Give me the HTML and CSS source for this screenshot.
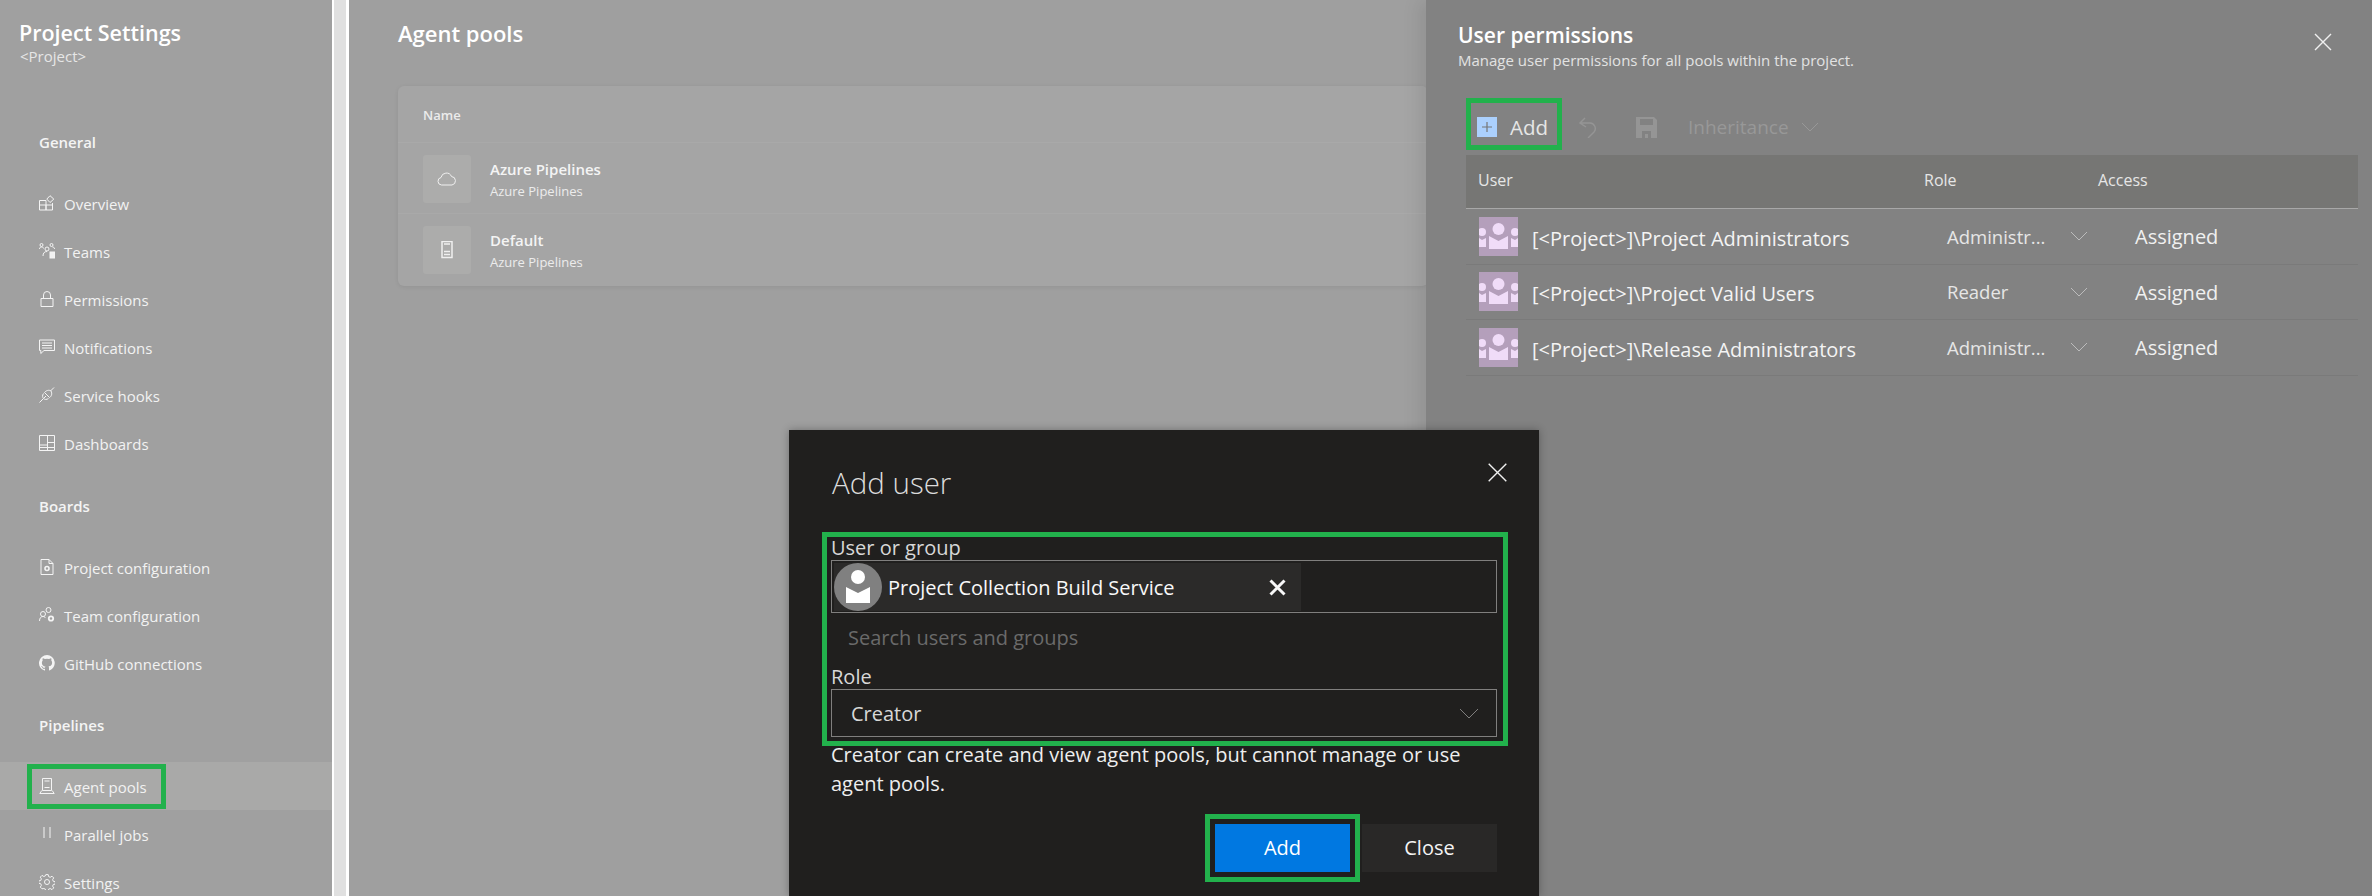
FILE: index.html
```html
<!DOCTYPE html>
<html lang="en">
<head>
    <meta charset="UTF-8">
    <title>Agent pools - Project Settings</title>
    <link rel="stylesheet" href="styles.css">
</head>
<body>
    <div id="page">
        <div id="sidebar">
            <div class="side-title">Project Settings</div>
            <div class="side-sub">&lt;Project&gt;</div>

            <div class="side-head first">General</div>
            <ul class="side-list">
                <li>
                    <svg class="ico" viewBox="0 0 16 16"><path d="M.5 5.500h6.500v9.500H.5zM.5 10h13M7 10v5M7 15h6.500V8M11 .7l3.800 3.400L11 7.500 7.800 4.100z"/></svg>
                    <span>Overview</span>
                </li>
                <li>
                    <svg class="ico" viewBox="0 0 16 16"><circle cx="2.500" cy="2" r="1.500"/><circle cx="12.500" cy="2" r="1.500"/><circle cx="8" cy="6" r="2"/><path d="M.5 6c0-1.500 1-2 2-2s1.500.5 2.500 1.500M15.500 6c0-1.500-1-2-2-2M4 13c0-3 1.500-4.500 4-4.500"/><rect x="11" y="9" width="4.500" height="6" fill="currentColor"/></svg>
                    <span>Teams</span>
                </li>
                <li>
                    <svg class="ico" viewBox="0 0 16 16"><path d="M2 7.500h12v8H2zM4.500 7.500V4a3.500 3.500 0 0 1 7 0v3.500"/></svg>
                    <span>Permissions</span>
                </li>
                <li>
                    <svg class="ico" viewBox="0 0 16 16"><path d="M.5 1h15v10.500H5L1.800 14.500v-3H.5zM3 4h10M3 6.500h10M3 9h10"/></svg>
                    <span>Notifications</span>
                </li>
                <li>
                    <svg class="ico" viewBox="0 0 16 16"><path d="M.5 15.500l4-4M15 .5l-3.500 3.500M5.500 5.500l5 5c2-1 3-4 1.500-6.500-2-1.500-5-.5-6.500 1.500zM4.500 6.500c-1.500 2-1 4 0 5s3 1.500 5 0M7 9l-2 2"/></svg>
                    <span>Service hooks</span>
                </li>
                <li>
                    <svg class="ico" viewBox="0 0 16 16"><path d="M.5.5h15v15H.5zM8.500.5v15M.5 10h8M8.500 7.500h7M.5 12.500h15"/></svg>
                    <span>Dashboards</span>
                </li>
            </ul>

            <div class="side-head">Boards</div>
            <ul class="side-list">
                <li>
                    <svg class="ico" viewBox="0 0 16 16"><path d="M2 .5h8l4 4v11H2zM10 .5v4h4"/><circle cx="8" cy="9.500" r="2" stroke-width="1.600"/></svg>
                    <span>Project configuration</span>
                </li>
                <li>
                    <svg class="ico" viewBox="0 0 16 16"><circle cx="9.500" cy="3" r="2.500"/><circle cx="4" cy="7" r="2.500"/><path d="M.5 14c0-3 1.500-4.500 3.500-4.500 1 0 2 .5 2.500 1.500"/><circle cx="12" cy="11.500" r="2.200" stroke-width="1.800"/></svg>
                    <span>Team configuration</span>
                </li>
                <li>
                    <svg class="ico" viewBox="0 0 16 16"><path class="solid" d="M8 0a8 8 0 0 0-2.500 15.600c.4.100.5-.2.500-.4v-1.400c-2.200.5-2.700-1-2.700-1-.4-.9-.9-1.200-.9-1.200-.7-.5.100-.5.100-.5.800.1 1.200.8 1.200.8.700 1.200 1.900.9 2.300.7.100-.5.300-.9.500-1.100-1.800-.2-3.600-.9-3.600-4 0-.9.300-1.600.8-2.100-.1-.2-.4-1 .1-2.100 0 0 .7-.2 2.200.8a7.600 7.600 0 0 1 4 0c1.500-1 2.200-.8 2.200-.8.400 1.100.2 1.900.1 2.100.5.600.8 1.300.8 2.100 0 3.100-1.900 3.700-3.600 3.900.3.200.5.700.5 1.500v2.200c0 .2.100.5.500.4A8 8 0 0 0 8 0z"/></svg>
                    <span>GitHub connections</span>
                </li>
            </ul>

            <div class="side-head">Pipelines</div>
            <ul class="side-list">
                <li class="active">
                    <div class="mark-nav">
                        <svg class="ico" viewBox="0 0 16 16"><path d="M3.500.5h9v12h-9zM5.500 3h5M5.500 9.500h5M.8 15.500l2-3M15.200 15.500l-2-3M.8 15.500h14.400"/></svg>
                        <span>Agent pools</span>
                    </div>
                </li>
                <li>
                    <svg class="ico" viewBox="0 0 16 16"><path d="M5 1v11M11 1v11"/></svg>
                    <span>Parallel jobs</span>
                </li>
                <li>
                    <svg class="ico" viewBox="0 0 16 16"><circle cx="8" cy="8" r="2.500"/><path d="M6.800.6h2.400l.4 2 1.600.7 1.800-1.100 1.700 1.700-1.100 1.800.7 1.600 2 .4v2.400l-2 .4-.7 1.600 1.100 1.800-1.700 1.700-1.800-1.100-1.600.7-.4 2H6.800l-.4-2-1.600-.7L3 14.800l-1.700-1.700 1.100-1.800-.7-1.600-2-.4V6.900l2-.4.700-1.600L1.300 3.100 3 1.400l1.800 1.100 1.600-.7z"/></svg>
                    <span>Settings</span>
                </li>
            </ul>
        </div>

        <div id="divider"></div>

        <div id="main">
            <h1 class="main-title">Agent pools</h1>
            <div class="card">
                <div class="card-head">Name</div>
                <div class="pool">
                    <div class="pool-icon">
                        <svg width="20" height="14" viewBox="0 0 20 14"><path d="M5 13H4.500a3.800 3.800 0 0 1-.5-7.500A5.500 5.500 0 0 1 14.500 4.500 4.300 4.300 0 0 1 15 13z"/></svg>
                    </div>
                    <div class="pool-text">
                        <div class="pool-name">Azure Pipelines</div>
                        <div class="pool-sub">Azure Pipelines</div>
                    </div>
                </div>
                <div class="pool">
                    <div class="pool-icon">
                        <svg width="12" height="18" viewBox="0 0 12 18"><path d="M1 .5h10v16H1zM3 3h6M3 10.500h6M3 13.500h6" stroke-width="1.500"/></svg>
                    </div>
                    <div class="pool-text">
                        <div class="pool-name">Default</div>
                        <div class="pool-sub">Azure Pipelines</div>
                    </div>
                </div>
            </div>
        </div>

        <div id="panel">
            <div class="panel-title">User permissions</div>
            <div class="panel-sub">Manage user permissions for all pools within the project.</div>
            <svg class="panel-close" width="18" height="18" viewBox="0 0 18 18"><path d="M1 1l16 16M17 1L1 17"/></svg>

            <div class="toolbar">
                <div class="mark-add">
                    <svg class="plus" width="20" height="20" viewBox="0 0 20 20"><path fill="#abd0fd" d="M0 0h20v20H0z"/><path fill="none" stroke="#767676" stroke-width="1.200" d="M10 5v10M5 10h10"/></svg>
                    <span>Add</span>
                </div>
                <svg class="undo" width="18" height="21" viewBox="0 0 18 21"><path d="M6 1L1 6l6 4M1.500 6H11a5.500 5.500 0 0 1 4 9l-6 6"/></svg>
                <svg class="save" width="21" height="21" viewBox="0 0 21 21"><path d="M0 0h18l3 3v18H0zM4 2v6h13V2zM6 14v7h3v-4h3v4h3v-7z" fill-rule="evenodd"/></svg>
                <span class="inherit">Inheritance</span>
                <svg class="chev dim" width="18" height="10" viewBox="0 0 18 10"><path d="M1 1l8 8 8-8"/></svg>
            </div>

            <div class="perm-head">
                <div class="col-user">User</div>
                <div class="col-role">Role</div>
                <div>Access</div>
            </div>

            <div class="perm-row">
                <svg class="group" viewBox="0 0 39 39"><use href="#group-figs"/></svg>
                <div class="perm-name">[&lt;Project&gt;]\Project Administrators</div>
                <div class="perm-role">Administr...</div>
                <svg class="chev" width="18" height="10" viewBox="0 0 18 10"><path d="M1 1l8 8 8-8"/></svg>
                <div class="perm-access">Assigned</div>
            </div>
            <div class="perm-row">
                <svg class="group" viewBox="0 0 39 39"><use href="#group-figs"/></svg>
                <div class="perm-name">[&lt;Project&gt;]\Project Valid Users</div>
                <div class="perm-role">Reader</div>
                <svg class="chev" width="18" height="10" viewBox="0 0 18 10"><path d="M1 1l8 8 8-8"/></svg>
                <div class="perm-access">Assigned</div>
            </div>
            <div class="perm-row">
                <svg class="group" viewBox="0 0 39 39"><use href="#group-figs"/></svg>
                <div class="perm-name">[&lt;Project&gt;]\Release Administrators</div>
                <div class="perm-role">Administr...</div>
                <svg class="chev" width="18" height="10" viewBox="0 0 18 10"><path d="M1 1l8 8 8-8"/></svg>
                <div class="perm-access">Assigned</div>
            </div>
        </div>

        <div id="modal">
            <div class="modal-head">
                <div class="modal-title">Add user</div>
                <svg class="modal-close" width="19" height="19" viewBox="0 0 19 19"><path d="M.7.7l17.600 17.600M18.300.7L.7 18.300"/></svg>
            </div>

            <div class="mark-fields">
                <div class="field-label">User or group</div>
                <div class="picker">
                    <div class="chip">
                        <svg width="48" height="48" viewBox="0 0 48 48"><circle cx="24" cy="24" r="24" fill="#808080"/><circle cx="24" cy="14" r="7" fill="#fff"/><path fill="#fff" d="M12 24l12 6 12-6v16H12z"/></svg>
                        <span class="chip-name">Project Collection Build Service</span>
                        <svg class="chip-x" width="17" height="17" viewBox="0 0 17 17"><path d="M1.500 1.500l14 14M15.500 1.500l-14 14"/></svg>
                    </div>
                </div>
                <div class="search">Search users and groups</div>
                <div class="field-label">Role</div>
                <div class="select">
                    <span>Creator</span>
                    <svg class="chev" width="20" height="11" viewBox="0 0 20 11"><path d="M1 1l9 9 9-9"/></svg>
                </div>
            </div>

            <p class="role-note">Creator can create and view agent pools, but cannot manage or use agent pools.</p>

            <div class="modal-btns">
                <div class="mark-btn"><div class="btn btn-primary">Add</div></div>
                <div class="btn">Close</div>
            </div>
        </div>
    </div>

    <svg width="0" height="0" class="defs">
        <defs>
            <g id="group-figs">
                <rect width="39" height="39" fill="#b49fbb"/>
                <g fill="#f0dcf8">
                    <circle cx="19.500" cy="12" r="6"/>
                    <path d="M10 19l9.500 5 9.500-5v13H10z"/>
                    <circle cx="3" cy="15" r="4"/>
                    <circle cx="36" cy="15" r="4"/>
                    <path d="M0 21l3 2 4-2v9H0zM32 21l4 2 3-2v9h-7z"/>
                </g>
            </g>
        </defs>
    </svg>
</body>
</html>
```

FILE: styles.css
```css
*{
    margin: 0;
    padding: 0;
    box-sizing: border-box;
}
ul{
    list-style: none;
}
html,body{
    height: 100%;
    overflow: hidden;
}
body{
    font-family: "Open Sans", "Liberation Sans", sans-serif;
    color: #fff;
    background: #a0a0a0;
}
svg{
    display: block;
    flex: none;
}
.defs{
    position: absolute;
}

#page{
    position: relative;
    display: flex;
    width: 2372px;
    height: 896px;
    overflow: hidden;
}

/* left nav */
#sidebar{
    width: 332px;
    flex: none;
    padding-top: 19px;
    background: #a0a0a0;
}
.side-title{
    padding-left: 19px;
    font-size: 21.500px;
    line-height: 28px;
    font-weight: 600;
}
.side-sub{
    padding-left: 20px;
    font-size: 15px;
    line-height: 18px;
    color: #e6e6e6;
}
.side-head{
    padding-left: 39px;
    margin-top: 20.500px;
    height: 36px;
    line-height: 36px;
    font-size: 15px;
    font-weight: 600;
    color: #f4f4f4;
}
.side-head.first{
    margin-top: 59px;
}
.side-list{
    margin-top: 19px;
}
.side-list li{
    display: flex;
    align-items: center;
    gap: 9px;
    height: 48px;
    padding-left: 39px;
    font-size: 15px;
    color: #f2f2f2;
}
.side-list li span{
    padding-top: 2px;
}
.ico{
    width: 16px;
    height: 16px;
    fill: none;
    stroke: #f4f4f4;
    stroke-width: 1;
}
.ico .solid{
    fill: #f4f4f4;
    stroke: none;
}
.side-list .active{
    padding-left: 27px;
    background: #a9a9a8;
}
.mark-nav{
    display: flex;
    align-items: center;
    gap: 9px;
    width: 139px;
    height: 45px;
    padding-left: 7px;
    border: 5px solid #22b14c;
}

#divider{
    width: 17px;
    flex: none;
    background: #e0e0e0;
    border-left: 2px solid #fff;
    border-right: 3px solid #fff;
}

/* agent pools list */
#main{
    flex: 1;
    padding: 19px 0 0 49px;
    background: #9f9f9f;
}
.main-title{
    font-size: 22px;
    line-height: 28px;
    font-weight: 600;
}
.card{
    width: 1030px;
    height: 200px;
    margin-top: 39px;
    background: #a5a5a5;
    border-radius: 6px;
    box-shadow: 0 1px 4px rgba(0,0,0,.08);
}
.card-head{
    height: 57px;
    padding: 20px 0 0 25px;
    font-size: 13px;
    line-height: 18px;
    font-weight: 600;
    color: #ececec;
    border-bottom: 1px solid #a9a9a9;
}
.pool{
    display: flex;
    gap: 19px;
    height: 71px;
    padding: 12px 0 0 25px;
    border-bottom: 1px solid #a9a9a9;
}
.pool:last-child{
    border-bottom: 0;
}
.pool-icon{
    display: flex;
    align-items: center;
    justify-content: center;
    width: 48px;
    height: 48px;
    background: #acacab;
    border-radius: 3px;
}
.pool-icon svg{
    fill: none;
    stroke: #f0f0f0;
    stroke-width: 1;
}
.pool-text{
    padding-top: 4px;
}
.pool-name{
    font-size: 15px;
    line-height: 20px;
    font-weight: 600;
    color: #f4f4f4;
}
.pool-sub{
    margin-top: 3px;
    font-size: 13px;
    line-height: 18px;
    color: #ececec;
}

/* user permissions panel, sits over the list */
#panel{
    position: absolute;
    top: 0;
    right: 0;
    bottom: 0;
    width: 946px;
    padding: 21px 14px 0 32px;
    background: #828282;
    box-shadow: -8px 0 16px rgba(0,0,0,.08);
}
.panel-title{
    font-size: 21px;
    line-height: 28px;
    font-weight: 600;
}
.panel-sub{
    margin-top: 2px;
    font-size: 15px;
    line-height: 18px;
    color: #e2e2e2;
}
.panel-close{
    position: absolute;
    top: 33px;
    right: 40px;
    fill: none;
    stroke: #f0f0f0;
    stroke-width: 1.4;
}
.toolbar{
    display: flex;
    align-items: center;
    height: 52px;
    margin: 29px 0 5px 8px;
}
.mark-add{
    display: flex;
    align-items: center;
    gap: 13px;
    width: 96px;
    height: 52px;
    padding: 6px 0 0 6px;
    border: 5px solid #22b14c;
    font-size: 20.500px;
    color: #e6e6e6;
}
.undo{
    margin: 6px 0 0 17px;
    fill: none;
    stroke: #959595;
    stroke-width: 1.4;
}
.save{
    margin: 6px 0 0 39px;
    fill: #959595;
}
.inherit{
    margin: 6px 0 0 31px;
    font-size: 19px;
    color: #989898;
}
.chev{
    fill: none;
    stroke: #bcbcbc;
    stroke-width: 1;
}
.chev.dim{
    margin: 6px 0 0 12px;
    stroke: #989898;
}
.perm-head{
    display: flex;
    align-items: center;
    height: 54px;
    margin-left: 8px;
    padding-bottom: 3px;
    background: #767674;
    border-bottom: 1px solid #a8a8a8;
    font-size: 16px;
    color: #e6e6e6;
}
.col-user{
    width: 458px;
    padding-left: 12px;
}
.col-role{
    width: 174px;
}
.perm-row{
    display: flex;
    align-items: center;
    height: 55.500px;
    margin-left: 8px;
    padding-left: 13px;
    border-bottom: 1px solid #7a7a7a;
    font-size: 20px;
}
.group{
    width: 39px;
    height: 39px;
}
.perm-name{
    width: 415px;
    margin-left: 14px;
    padding-top: 4px;
    color: #f4f4f4;
}
.perm-role{
    width: 123px;
    font-size: 18.500px;
    color: #e6e6e6;
}
.perm-access{
    margin-left: 47px;
    padding-top: 1px;
    color: #f0f0f0;
}

/* add user dialog */
#modal{
    position: absolute;
    top: 430px;
    left: 789px;
    width: 750px;
    height: 466px;
    padding: 0 42px 0 33px;
    background: #201f1e;
    box-shadow: 0 0 8px rgba(0,0,0,.3);
}
.modal-head{
    display: flex;
    align-items: center;
    justify-content: space-between;
    height: 102px;
    margin-right: -10px;
    padding-left: 10px;
}
.modal-title{
    margin-top: 3px;
    font-size: 29.500px;
    font-weight: 300;
    color: #dcdcdc;
}
.modal-close{
    margin-top: -18px;
    fill: none;
    stroke: #f0f0f0;
    stroke-width: 1.4;
}
.mark-fields{
    display: flex;
    flex-direction: column;
    width: 686px;
    height: 214px;
    padding: 1px 6px 0 4px;
    border: 5px solid #22b14c;
    font-size: 20px;
}
.field-label{
    height: 19px;
    line-height: 19px;
    color: #d8d8d8;
}
.picker{
    height: 53px;
    margin-top: 3px;
    padding: 2px;
    border: 1px solid #807f7e;
}
.chip{
    display: flex;
    align-items: center;
    width: 467px;
    height: 48px;
    background: #2b2a29;
}
.chip-name{
    width: 381px;
    margin-left: 6px;
    color: #f8f8f8;
}
.chip-x{
    fill: none;
    stroke: #f8f8f8;
    stroke-width: 3;
}
.search{
    height: 54px;
    padding: 11px 0 0 17px;
    line-height: 27px;
    color: #6a6a6a;
}
.select{
    display: flex;
    align-items: center;
    justify-content: space-between;
    height: 48px;
    margin-top: 3px;
    padding: 0 17px 0 19px;
    border: 1px solid #807f7e;
    color: #d8d8d8;
}
.select .chev{
    stroke: #807f7e;
}
.role-note{
    margin: -6px 0 0 9px;
    width: 666px;
    font-size: 20px;
    line-height: 29px;
    color: #eeeeee;
}
.modal-btns{
    display: flex;
    align-items: center;
    justify-content: flex-end;
    gap: 2px;
    margin-top: 16px;
    width: 675px;
}
.mark-btn{
    padding: 5px;
    border: 5px solid #22b14c;
}
.btn{
    width: 135px;
    height: 48px;
    line-height: 48px;
    text-align: center;
    font-size: 20px;
    font-weight: 500;
    background: #292827;
    color: #f4f4f4;
}
.btn-primary{
    background: #0078e1;
    color: #fff;
}
```
